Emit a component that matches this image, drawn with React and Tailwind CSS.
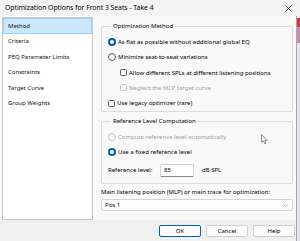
import React from "react";

const font = { fontFamily: '"Noto Sans", "Open Sans", sans-serif' };

function Radio({ checked, disabled }) {
  if (checked) {
    return <span className="block w-[8px] h-[8px] rounded-full border-[2.5px] border-[#005fb8] bg-white shrink-0" />;
  }
  if (disabled) {
    return <span className="block w-[8px] h-[8px] rounded-full border border-[#c6c6c6] bg-[#fbfbfb] shrink-0" />;
  }
  return <span className="block w-[8px] h-[8px] rounded-full border border-[#5e5e5e] bg-[#f7f7f7] shrink-0" />;
}

function Check({ disabled }) {
  if (disabled) {
    return <span className="block w-[7px] h-[7px] rounded-[1.5px] border border-[#c6c6c6] bg-[#fbfbfb] shrink-0" />;
  }
  return <span className="block w-[7px] h-[7px] rounded-[1.5px] border border-[#5e5e5e] bg-[#f7f7f7] shrink-0" />;
}

export default function App() {
  const items = ["Method", "Criteria", "PEQ Parameter Limits", "Constraints", "Target Curve", "Group Weights"];
  return (
    <div className="relative w-[300px] h-[241px] flex flex-col bg-[#f0f0f0] overflow-hidden text-black" style={font}>
      {/* title bar */}
      <div className="h-[16px] flex items-center justify-between pl-[5px] pr-[8px] bg-[#f3f3f3] text-[6.8px] leading-none shrink-0">
        <span>Optimization Options for Front 3 Seats - Take 4</span>
        <svg width="7" height="7" viewBox="0 0 7 7">
          <path d="M0.5 0.5 L6.5 6.5 M6.5 0.5 L0.5 6.5" stroke="#333" strokeWidth="0.8" />
        </svg>
      </div>
      <div className="flex flex-1">
        <div className="w-[297px] h-full flex flex-col bg-[#f0f0f0] border-r border-[#a8a8a8]">
          {/* body */}
          <div className="flex flex-1 bg-[#f9f9f9] text-[6px] leading-none">
            <div className="ml-[2px] mt-[1px] w-[91px] bg-white border border-[#c8c8c8] flex flex-col text-[#111]">
              {items.map((it, i) =>
                i === 0 ? (
                  <div key={it} className="h-[15.5px] flex items-center pl-[4px] bg-[#cce8ff] border border-[#99d1ff]">
                    {it}
                  </div>
                ) : (
                  <div key={it} className="h-[15.5px] flex items-center pl-[5px]">
                    {it}
                  </div>
                )
              )}
            </div>
            <div className="flex-1 flex flex-col pl-[8px] pr-[3px]">
              <div className="mt-[10px] h-[86px] border border-[#dcdcdc] rounded-[2px] px-[6px]">
                <div className="-mt-[5px] ml-[3px] px-[2px] w-fit h-[8px] leading-[8px] bg-[#f9f9f9]">Optimization Method</div>
                <div className="flex flex-col pt-[4.4px]">
                  <div className="h-[15.25px] flex items-center gap-[2px]"><Radio checked /><span>As flat as possible without additional global EQ</span></div>
                  <div className="h-[15.25px] flex items-center gap-[2px]"><Radio /><span>Minimize seat-to-seat variations</span></div>
                  <div className="h-[15.25px] flex items-center gap-[2px] pl-[12px]"><Check /><span>Allow different SPLs at different listening positions</span></div>
                  <div className="h-[15.25px] flex items-center gap-[2px] pl-[12px] text-[#a0a0a0]"><Check disabled /><span>Neglect the MLP target curve</span></div>
                  <div className="h-[15.25px] flex items-center gap-[2px]"><Check /><span>Use legacy optimizer (rare)</span></div>
                </div>
              </div>
              <div className="mt-[9px] h-[63px] border border-[#dcdcdc] rounded-[2px] px-[6px]">
                <div className="-mt-[5px] ml-[3px] px-[2px] w-fit h-[8px] leading-[8px] bg-[#f9f9f9]">Reference Level Computation</div>
                <div className="flex flex-col pt-[4.5px]">
                  <div className="h-[15px] flex items-center gap-[2px] text-[#a0a0a0]"><Radio disabled /><span>Compute reference level automatically</span></div>
                  <div className="h-[15px] flex items-center gap-[2px]"><Radio checked /><span>Use a fixed reference level</span></div>
                  <div className="mt-[1.5px] h-[18px] flex items-center">
                    <span className="w-[52px]">Reference level:</span>
                    <div className="w-[34px] h-[13px] bg-white border border-[#d4d4d4] border-b-[#8a8a8a] rounded-[1.5px] flex items-center pl-[3px]">85</div>
                    <span className="ml-[8px]">dB SPL</span>
                  </div>
                </div>
              </div>
              <div className="mt-[4px] h-[8px] leading-[8px]">Main listening position (MLP) or main trace for optimization:</div>
              <div className="mt-[3px] h-[12px] bg-[#fdfdfd] border border-[#d4d4d4] rounded-[2px] flex items-center justify-between pl-[3px] pr-[4px]">
                <span>Pos 1</span>
                <svg width="5" height="3" viewBox="0 0 5 3"><path d="M0.3 0.3 L2.5 2.5 L4.7 0.3" stroke="#777" strokeWidth="0.6" fill="none" /></svg>
              </div>
            </div>
          </div>
          {/* button bar */}
          <div className="h-[21px] shrink-0 flex items-center justify-end gap-[5px] pr-[1px] bg-[#f0f0f0] text-[6px] leading-none">
            <div className="w-[42px] h-[12px] flex items-center justify-center bg-[#fdfdfd] border border-[#005fb8] rounded-[2px]">OK</div>
            <div className="w-[42px] h-[12px] flex items-center justify-center bg-[#fdfdfd] border border-[#d0d0d0] rounded-[2px]">Cancel</div>
            <div className="w-[42px] h-[12px] flex items-center justify-center bg-[#fdfdfd] border border-[#d0d0d0] rounded-[2px]">Help</div>
          </div>
        </div>
        <div className="flex-1 flex flex-col">
          <div className="h-[2px] bg-[#f3f3f3]" />
          <div className="h-[9px] bg-[#d03848]" />
          <div className="h-[16px] bg-[#c890b0]" />
          <div className="flex-1 bg-[#e6e6ec]" />
        </div>
      </div>
      {/* mouse cursor */}
      <svg className="absolute left-[261px] top-[134px]" width="7" height="11" viewBox="0 0 7 11">
        <path d="M0.5 0.5 L0.5 8.5 L2.4 6.8 L3.7 9.8 L4.9 9.3 L3.7 6.4 L6.2 6.4 Z" fill="#fff" stroke="#444" strokeWidth="0.6" strokeLinejoin="round" />
      </svg>
    </div>
  );
}
